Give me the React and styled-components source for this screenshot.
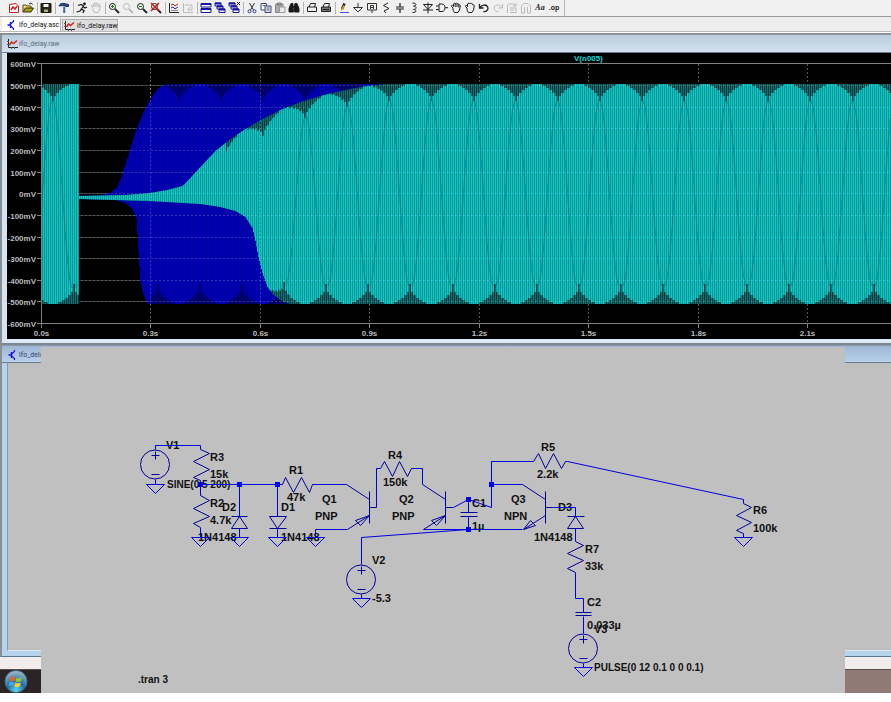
import React from 'react';
import styled, { createGlobalStyle, css } from 'styled-components';

const GlobalStyle = createGlobalStyle`
  * { box-sizing: border-box; }
  body { margin: 0; background: #ffffff; font-family: "Liberation Sans", Arial, sans-serif; }
`;

/* ---------- application chrome ---------- */

const Shell = styled.main`
  display: flex;
  flex-direction: column;
  overflow: hidden;
`;

const Toolbar = styled.div`
  display: flex;
  align-items: center;
  height: 17px;
  padding-left: 7px;
  background: #f0f0f0;
  border-bottom: 1px solid #9c9c9c;
`;

const ToolGroup = styled.div`
  display: flex;
  align-items: center;
`;

const Divider = styled.span`
  width: 1px;
  height: 12px;
  margin: 0 1px 0 2px;
  background: #b4b4b4;
`;

const ToolEnd = styled.span`
  width: 1px;
  height: 16px;
  margin-left: 3px;
  background: #b4b4b4;
`;

const ToolButton = styled.button`
  display: flex;
  align-items: center;
  justify-content: center;
  width: 14px;
  height: 14px;
  padding: 0;
  border: 0;
  background: none;
  color: ${(p) => (p.$muted ? '#b9b9b9' : '#202020')};
`;

const GlyphText = styled.span`
  font: ${(p) => (p.$script ? 'italic bold 8px "Liberation Serif", serif' : 'bold 7px "Liberation Sans", sans-serif')};
  line-height: 10px;
`;

const TabStrip = styled.nav`
  display: flex;
  align-items: flex-end;
  gap: 1px;
  height: 14px;
  padding-left: 2px;
  background: #eeeeee;
`;

const Tab = styled.button`
  display: flex;
  align-items: center;
  gap: 2px;
  padding: 0 0 0 3px;
  font: 7px Roboto, "Liberation Sans", sans-serif;
  color: #101010;
  white-space: nowrap;
  border: 1px solid #b0b0b0;
  border-bottom: 0;
  svg { flex: none; }
  ${(p) =>
    p.$active
      ? css`
          width: 59px;
          height: 14px;
          background: #ffffff;
          border-color: #ffffff #b0b0b0 #ffffff #ffffff;
        `
      : css`
          width: 56px;
          height: 12px;
          padding-left: 1px;
          background: #dedede;
        `}
`;

const Rule = styled.div`
  height: 3px;
  background: #ffffff;
  border-top: 1px solid #b8b8b8;
  border-bottom: 1px solid #8c8c8c;
`;

const Frame = styled.section`
  display: flex;
  flex-direction: column;
  border-left: 2px solid #8a8f96;
  padding-left: 5px;
  background: ${(p) => (p.$active ? '#b6d2ec' : '#d6e4f2')};
`;

const TitleBar = styled.header`
  display: flex;
  align-items: center;
  gap: 1px;
  height: ${(p) => (p.$active ? '18px' : '19px')};
  margin-left: -5px;
  padding: 1px 0 0 5px;
  font: 7px Roboto, "Liberation Sans", sans-serif;
  color: ${(p) => (p.$active ? '#2c3e58' : '#5d6c7c')};
  background: ${(p) =>
    p.$active
      ? 'linear-gradient(#9db8d6, #b9d0ea)'
      : 'linear-gradient(#b9cbdb, #d3e1ef)'};
  border-bottom: 1px solid #6d7c8c;
  border-top: 1px solid #8b98a5;
`;

const PlotPane = styled.div`
  background: #000000;
  svg { display: block; width: 100%; height: auto; }
`;

const FrameFoot = styled.div`
  height: 6px;
  margin-left: -5px;
  background: #dce8f4;
  border-bottom: 2px solid #7c8894;
`;

/* The lower desktop and the schematic sheet share one grid cell. */
const Stack = styled.div`
  display: grid;
  & > * { grid-area: 1 / 1; }
`;

const Desktop = styled.div`
  display: flex;
  flex-direction: column;
`;

const LowerFrame = styled(Frame)`
  flex: 1;
  border-bottom: 1px solid #58788c;
`;

const Client = styled.div`
  flex: 1;
  margin-bottom: 5px;
  background: #c0c0c0;
  border-left: 1px solid #8b98a5;
  border-bottom: 1px solid #dce8f0;
`;

const StatusBar = styled.footer`
  height: 12px;
  background: #f1eded;
`;

const TaskBar = styled.footer`
  display: flex;
  align-items: center;
  height: 24px;
  padding-left: 4px;
  background: linear-gradient(90deg, #2b2424 0 50%, #8f7a76 50%);
  border-top: 1px solid #5a4c4a;
`;

const StartButton = styled.button`
  width: 24px;
  height: 23px;
  padding: 0;
  border: 0;
  background: none;
  svg { display: block; }
`;

const Sheet = styled.div`
  align-self: start;
  margin: 2px 46px 0 41px;
  background: #c0c0c0;
  svg { display: block; width: 100%; height: auto; }
`;

const Label = styled.text`
  font: bold ${(p) => (p.$directive ? '10px' : '11px')} "Liberation Sans", Arial, sans-serif;
  fill: #101010;
`;

const AxisLabel = styled.text`
  font: bold 8px "Liberation Sans", Arial, sans-serif;
  fill: ${(p) => (p.$trace ? '#00d8d8' : '#bcbcbc')};
`;

/* ---------- toolbar icons ---------- */

const Ic = ({ children }) => (
  <svg width="12" height="12" viewBox="0 0 12 12" fill="none" stroke="currentColor" strokeWidth="1" aria-hidden="true">
    {children}
  </svg>
);

const WaveIcon = () => (
  <svg width="11" height="10" viewBox="0 0 11 10" fill="none" aria-hidden="true">
    <path d="M1.500 0V8.500H11" stroke="#222" />
    <path d="M0 2.500H2M0 5.500H2M4.500 8V10M7.500 8V10" stroke="#555" />
    <path d="M2.500 6L4.500 3L6.500 4.500L10 1.500" stroke="#d42020" strokeWidth="1.500" />
  </svg>
);

const SchematicIcon = () => (
  <svg width="11" height="10" viewBox="0 0 11 10" fill="none" stroke="#1414e0" aria-hidden="true">
    <path d="M1.500 5H4M4.500 2V8" strokeWidth="1.500" />
    <path d="M4.500 4L7.500 1.500V0M4.500 6L7.500 8.500V10" strokeWidth="1.200" />
  </svg>
);

const Lens = ({ children }) => (
  <Ic>
    <circle cx="4.500" cy="4.500" r="3" />
    <path d="M7 7L11 11" strokeWidth="1.800" />
    {children}
  </Ic>
);

const Hand = ({ open }) => (
  <Ic>
    <path d="M3 6L1.500 4.500C1 3.500 2 3 2.500 3.500L3.500 4.500V2C4 1 5 1 5.200 2C5.500 .8 6.800 .8 7 2C7.500 1.200 8.800 1.500 8.800 3C9.500 2.500 10.500 3 10.300 4L9.500 8L8 10.500H4.500L3 8Z" />
    {open && <path d="M5.200 2V5M7 2V5M8.800 3V5.500" />}
  </Ic>
);

const Printer = ({ filled }) => (
  <Ic>
    <path d="M3 5L4.500 1.500H9.500L8.500 5" />
    <path d="M1.500 5H10.500V9.500H1.500Z" fill={filled ? '#777' : 'none'} />
    {filled && <path d="M3 7.500H9" />}
  </Ic>
);

const Windows = ({ mark }) => (
  <Ic>
    <g stroke="#1717a0" fill="#fff">
      <path d="M1 1H7V4H1Z" /><path d="M3 4H9V7H3Z" /><path d="M5 7H11V10.500H5Z" />
      <path d="M1 1.500H7M3 4.500H9M5 7.500H11" strokeWidth="2" />
    </g>
    {mark && <path d="M9 0L12 3M12 0L9 3" stroke="#222" />}
  </Ic>
);

const groups = [
  [
    ['New schematic', <Ic><path d="M1.500 2.500L8 1.500L10.500 4V10.500H1.500Z" fill="#fff" stroke="#c02020" /><path d="M3 8L5 5L7 7L9 4" stroke="#e02020" strokeWidth="1.500" /></Ic>],
    ['Open', <Ic><path d="M1 10V3H4L5 4H9V6" fill="#f5e060" stroke="#55501a" /><path d="M1 10L3.500 6H11.500L9 10Z" fill="#a89c20" stroke="#33300a" /><path d="M7 2C8 .8 10 1 10.500 2.500" /></Ic>],
  ],
  [['Save', <Ic><path d="M1 1.500H11V10.500H1Z" fill="#282818" stroke="#181810" /><path d="M3.500 2H8.500V5H3.500Z" fill="#f0f0f0" stroke="none" /><path d="M4 7.500H8V10H4Z" fill="#b0b070" stroke="none" /></Ic>]],
  [['Control panel', <Ic><path d="M1 4C2 1.500 4 1 6 1.500L10.500 2.500V4.500H7.500V3.500H5Z" fill="#2b4a90" stroke="#1c2c60" /><path d="M6.200 4.500V11" stroke="#4668a8" strokeWidth="2" /></Ic>]],
  [
    ['Run', <Ic><circle cx="8.500" cy="1.800" r="1" fill="currentColor" /><path d="M2 3.500L5 2.500L7.500 4L5.500 7L8 8.500L7 11M5.500 7L4 9L.5 10M7 4.500L9 6L11 5" strokeWidth="1.300" /></Ic>],
    ['Halt', <Hand open />, true],
  ],
  [
    ['Zoom in', <Lens><path d="M3 4.500H6M4.500 3V6" stroke="#108010" /></Lens>],
    ['Pan', <Lens />, true],
    ['Zoom out', <Lens><path d="M3 4.500H6" stroke="#108010" /></Lens>],
    ['Zoom full extents', <Lens><path d="M1 1L9 9M9 1L1 9" stroke="#c81818" strokeWidth="1.500" /></Lens>],
  ],
  [
    ['Autorange', <Ic><path d="M1.500 1V10.500H11" /><path d="M3 3L5 2L7 4L10 2" stroke="#c02020" /><path d="M3 6L5 5L7 7L10 5" stroke="#2020c0" /><path d="M3 8.500H10" stroke="#888" /></Ic>],
    ['Add trace', <Ic><path d="M1.500 1V10.500H11M3 3H10V8H6M6 8L8 5" /></Ic>, true],
  ],
  [
    ['Tile windows', <Ic><g stroke="#1717a0"><path d="M1 1.500H11V5H1Z" fill="#fff" /><path d="M1 6.500H11V10.500H1Z" fill="#fff" /><path d="M1 2H11M1 7H11" strokeWidth="2" /></g></Ic>],
    ['Cascade windows', <Windows />],
    ['Close all windows', <Windows mark />],
  ],
  [
    ['Cut', <Ic><path d="M3.500 1L7.500 8M8.500 1L4.500 8" stroke="#303848" /><circle cx="3.500" cy="9.300" r="1.500" stroke="#303890" /><circle cx="8.500" cy="9.300" r="1.500" stroke="#303890" /></Ic>],
    ['Copy', <Ic><path d="M1 1.500H6.500V8H1Z" fill="#fff" stroke="#404878" /><path d="M5 4H11V10.500H5Z" fill="#dde" stroke="#404878" /><path d="M6.500 6H9.500M6.500 8H9.500M2.500 3.500H5" stroke="#666" /></Ic>],
    ['Paste', <Ic><path d="M1.500 2H9V10.500H1.500Z" fill="#aaa" stroke="#888" /><path d="M3.500 1H7V3H3.500Z" stroke="#777" /><path d="M5.500 5H11V10.500H5.500Z" fill="#e8e8e8" stroke="#999" /></Ic>],
    ['Find', <Ic><path d="M3 1.500H5V4L5.500 10H1V6.500ZM7 1.500H9L11 6.500V10H6.500V4Z" fill="#181818" /><path d="M5 5H7" strokeWidth="2" /></Ic>],
  ],
  [
    ['Print', <Printer />],
    ['Print preview', <Printer filled />],
  ],
  [
    ['Wire', <Ic><path d="M4 7L6.500 1.500" stroke="#302010" strokeWidth="2.500" /><path d="M3.500 8.500L6 3.500" stroke="#e0a020" strokeWidth="1.500" /><path d="M2 10.500H11" stroke="#4848e0" /></Ic>],
    ['Ground', <Ic><path d="M6 1V5.500M1.500 5.500H10.500L6 10Z" stroke="#34342a" /></Ic>],
    ['Label net', <Ic><path d="M1.500 1.500H10.500V8H1.500ZM6 8V11M4.500 7V3.500H7.500V7M4.500 5.500H7.500" stroke="#34342a" /></Ic>],
    ['Resistor', <Ic><path d="M8 1L3.500 3.500L9 6.500L4 9L6 11" /></Ic>],
    ['Capacitor', <Ic><path d="M6 1V5M2 5H10M2 7H10M6 7V11" strokeWidth="1.200" /></Ic>],
    ['Inductor', <Ic><path d="M4.500 1C9 1 9 4 5.500 4.200C9 4.500 9 7.200 5.500 7.500C9 7.800 9 10.500 4.500 10.500" /></Ic>],
    ['Diode', <Ic><path d="M6 .5V11.500M1.500 2.500H10.500L6 7.500ZM1 8H11" /></Ic>],
    ['Component', <Ic><path d="M3 2H6C10 2 10 9.500 6 9.500H3ZM0 4H3M0 7.500H3M9 5.700H12" /></Ic>],
    ['Move', <Hand open />],
    ['Drag', <Hand />],
    ['Undo', <Ic><path d="M1.500 2V6H5.500M1.500 6C4 2.500 8 2 9.700 5C11 8 8 10 5.500 9.500" strokeWidth="1.300" /></Ic>],
    ['Redo', <Ic><path d="M10.500 2V6H6.500M10.500 6C8 2.500 4 2 2.300 5C1 8 4 10 6.500 9.500" /></Ic>, true],
    ['Rotate', <Ic><path d="M1.500 11V4C2 1 8 1 10 4M10 1V4H7M4 6H10V10.500H4M4 8H8" /></Ic>, true],
    ['Mirror', <Ic><path d="M4.500 11H1.500V4L4 1.500H8L10.500 4V11H7.500M4.500 11V5M7.500 11V5" /></Ic>, true],
    ['Text', <GlyphText $script>Aa</GlyphText>],
    ['SPICE directive', <GlyphText>.op</GlyphText>],
  ],
];

/* ---------- waveform plot ---------- */

const PLOT_LEFT = 41;
const PLOT_RIGHT = 891;
const LOBE = 42.1;
const VALLEY = 431;

const interp = (pts, x) => {
  if (x <= pts[0][0]) return pts[0][1];
  for (let i = 1; i < pts.length; i += 1) {
    if (x <= pts[i][0]) {
      const [x0, y0] = pts[i - 1];
      const [x1, y1] = pts[i];
      return y0 + ((y1 - y0) * (x - x0)) / (x1 - x0);
    }
  }
  return pts[pts.length - 1][1];
};

const cyanTop = [[79, 196], [125, 195], [150, 193], [167, 190], [182, 186], [188, 180], [200, 167], [215, 151], [230, 139], [245, 129], [262, 119], [280, 110], [300, 102], [320, 96], [340, 91], [360, 87], [385, 84]];
const cyanBottom = [[79, 199], [150, 201], [200, 204], [220, 207], [235, 211], [245, 217], [252, 228], [255, 241], [258, 257], [262, 273], [267, 287], [273, 295], [283, 302], [290, 304]];
const blueTop = [[79, 196], [100, 195], [110, 193], [117, 187], [121, 177], [128, 155], [135, 132], [144, 110], [151, 97], [158, 88], [165, 84]];
const blueBottom = [[79, 199], [115, 200], [125, 203], [131, 208], [136, 218], [138, 250], [140, 282], [143, 295], [147, 303], [150, 304]];

/* distance in pixels to the nearest lobe boundary */
const near = (x, origin) => {
  const d = (((x - origin) % LOBE) + LOBE) % LOBE;
  return Math.min(d, LOBE - d);
};
const notch = (d, depth) => {
  if (d < 1) return depth;
  if (d < 3) return 12;
  if (d < 6) return 9;
  if (d < 9) return 6;
  if (d < 12) return 4;
  return d < 16 ? 2 : 0;
};

const bars = { cyanA: '', cyanB: '', cyanDark: '', cyanDeep: '', blueA: '', blueB: '', blueDark: '' };
for (let x = PLOT_LEFT; x < PLOT_RIGHT; x += 1) {
  const odd = x % 2 === 1;
  const burst = x < 79;
  const line = (a, b) => `M${x + 0.5} ${a}V${b}`;
  const t = notch(near(x, VALLEY), 17);
  const b = notch(near(x, VALLEY - LOBE / 2), 20);
  if (!burst && x < 420) {
    const y0 = interp(blueTop, x);
    const y1 = interp(blueBottom, x);
    const k = x > 150 ? 1 : 0;
    bars.blueDark += line(y0, y1);
    bars[x % 3 === 0 ? 'blueA' : 'blueB'] += line(y0 + t * k, y1 - b * k);
  }
  const y0 = burst ? 84 : interp(cyanTop, x);
  const y1 = burst ? 304 : interp(cyanBottom, x);
  const kt = burst || x > 225 ? 1 : 0;
  const kb = burst || x > 270 ? 1 : 0;
  bars[odd ? 'cyanDark' : 'cyanDeep'] += line(y0, y1);
  bars[odd ? 'cyanA' : 'cyanB'] += line(y0 + t * kt, y1 - b * kb);
}

let seams = '';
for (let v = VALLEY - LOBE * 9; v < PLOT_RIGHT + LOBE; v += LOBE) {
  [-1, 1].forEach((dir) => {
    let started = false;
    for (let i = 0; i <= 20; i += 1) {
      const x = v + dir * i;
      if ((x > 77 && x < 284) || x < PLOT_LEFT || x >= PLOT_RIGHT) continue;
      const a = x < 79 ? 100 : interp(cyanTop, x) + 16;
      const b = x < 79 ? 288 : interp(cyanBottom, x) - 18;
      const y = (a + b) / 2 - ((b - a) / 2) * Math.cos((Math.PI * i) / 20);
      seams += `${started ? 'L' : 'M'}${Math.round(x) + 0.5} ${Math.round(y)}`;
      started = true;
    }
  });
}

const voltTicks = [600, 500, 400, 300, 200, 100, 0, -100, -200, -300, -400, -500, -600];
const timeTicks = ['0.0s', '0.3s', '0.6s', '0.9s', '1.2s', '1.5s', '1.8s', '2.1s'];
const voltY = (mv) => Math.floor(193.7 - mv * 0.2165) + 0.5;
const timeX = (i) => Math.floor(41 + i * 109.5) + 0.5;

const Plot = () => (
  <svg viewBox="7 53 884 286" role="img" aria-label="V(n005) against time">
    <g stroke="#5a5a5a" strokeDasharray="2 2">
      {voltTicks.slice(1, -1).map((v) => <path key={v} d={`M41 ${voltY(v)}H891`} />)}
      {timeTicks.slice(1).map((t, i) => <path key={t} d={`M${timeX(i + 1)} 64V324`} />)}
    </g>
    <path d={bars.blueDark} stroke="#00006a" />
    <path d={bars.blueA} stroke="#000092" />
    <path d={bars.blueB} stroke="#0000b8" />
    <path d={bars.cyanDeep} stroke="#063c40" />
    <path d={bars.cyanDark} stroke="#0a7474" />
    <path d={bars.cyanA} stroke="#0cc8c4" />
    <path d={bars.cyanB} stroke="#00989a" />
    <path d={seams} stroke="#045c64" strokeOpacity="0.45" fill="none" />
    <g stroke="#ffffff" strokeOpacity="0.2" strokeDasharray="2 2">
      {voltTicks.slice(1, -1).map((v) => <path key={v} d={`M79 ${voltY(v)}H891`} />)}
      <path d={`M${timeX(1)} 84V304M${timeX(2)} 84V304`} />
    </g>
    <path d="M41.500 64V328M37 63.500H891M37 323.500H891" stroke="#808080" fill="none" />
    {voltTicks.map((v) => (
      <g key={v}>
        <path d={`M37 ${voltY(v)}H42`} stroke="#808080" />
        <AxisLabel x="36" y={voltY(v) + 3} textAnchor="end">{`${v}mV`}</AxisLabel>
      </g>
    ))}
    {timeTicks.map((t, i) => (
      <g key={t}>
        <path d={`M${timeX(i)} 323V328`} stroke="#808080" />
        <AxisLabel x={timeX(i)} y="336" textAnchor="middle">{t}</AxisLabel>
      </g>
    ))}
    <AxisLabel $trace x="574" y="61">V(n005)</AxisLabel>
  </svg>
);

/* ---------- schematic ---------- */

const grounds = [[155, 484], [200, 537], [239, 537], [277, 537], [315, 537], [361, 598], [743, 537], [583, 667]];
const nodes = [[200, 484], [239, 484], [277, 484], [468, 499], [468, 529], [491, 484]];
const sources = [[155, 464, 'V1'], [361, 579, 'V2'], [583, 648, 'V3']];

const wires = [
  'M155 449V445H200V449M155 479V484M200 480V495M200 527V537',
  'M200 484H282M239 484V516M239 528V537M277 484V516M277 528V537M312 484H346',
  'M347 529H315V537M376 507V468H380M411 468H422V484',
  'M453 507L468 499L491 507V461H533M491 484H522M468 499V512M468 516V529M423 529H522M468 529L361 537V564M361 594V598',
  'M567 461L743 499V503M743 533V537M553 507H575V516M575 528V541M575 572V598H583V612M583 616V633M583 663V667',
];

const parts = [
  'M200 449L209 453L193 461L209 469L193 477L200 480',
  'M200 495L209 500L193 508L209 516L193 523L200 527',
  'M282 484L285 477L293 492L301 477L309 492L312 484',
  'M380 468L384 461L392 476L399 461L407 476L411 468',
  'M533 461L538 453L545 468L553 453L561 468L565 461H567',
  'M743 503L751 507L736 515L751 522L736 530L743 533',
  'M575 541L583 545L567 553L583 560L567 568L575 572',
  'M231 516H247M239 516L231 528H247Z',
  'M269 516H286L277 528ZM269 528H286',
  'M567 516H584M575 516L567 528H583Z',
  'M346 484L369 499M369 491V523M369 507H376M369 515L347 529M369 515L355 520L360 525Z',
  'M422 484L445 499M445 491V523M445 507H453M445 515L423 529M445 515L431 520L436 525Z',
  'M522 484L545 499M545 491V523M545 507H553M545 515L523 529M523 529L530 520L535 525Z',
  'M460 512H477M460 516H477M575 612H591M575 615H591',
];

const labels = [
  [166, 449, 'V1'], [210, 461, 'R3'], [210, 478, '15k'], [167, 488, 'SINE(0 5 200)', true],
  [210, 507, 'R2'], [210, 524, '4.7k'], [222, 511, 'D2'], [198, 541, '1N4148'],
  [281, 511, 'D1'], [281, 541, '1N4148'], [289, 474, 'R1'], [287, 501, '47k'],
  [322, 503, 'Q1'], [315, 520, 'PNP'], [388, 459, 'R4'], [383, 486, '150k'],
  [399, 503, 'Q2'], [392, 520, 'PNP'], [472, 507, 'C1'], [472, 530, '1µ'],
  [372, 564, 'V2'], [372, 602, '-5.3'], [541, 451, 'R5'], [537, 478, '2.2k'],
  [511, 503, 'Q3'], [504, 520, 'NPN'], [558, 511, 'D3'], [534, 541, '1N4148'],
  [585, 553, 'R7'], [585, 570, '33k'], [587, 606, 'C2'], [587, 629, '0.033µ'],
  [594, 633, 'V3'], [594, 671, 'PULSE(0 12 0.1 0 0 0.1)', true], [753, 514, 'R6'],
  [753, 532, '100k'], [138, 683, '.tran 3', true],
];

const Schematic = () => (
  <svg viewBox="41 347 804 346" role="img" aria-label="LFO delay schematic">
    {labels.map(([x, y, t, directive]) => (
      <Label key={`${x}-${y}`} x={x} y={y} $directive={directive}>{t}</Label>
    ))}
    <g transform="translate(.5 .5)" fill="none" strokeWidth="1">
      {parts.map((d) => <path key={d} d={d} stroke="#000098" />)}
      {sources.map(([x, y, n]) => (
        <g key={n} stroke="#000098">
          <circle cx={x - 0.5} cy={y} r="14.500" />
          <path d={`M${x - 4} ${y - 9}H${x + 4}M${x} ${y - 13}V${y - 5}M${x - 4} ${y + 10}H${x + 4}`} />
        </g>
      ))}
      {wires.map((d) => <path key={d} d={d} stroke="#0000dc" />)}
      {grounds.map(([x, y]) => <path key={`${x}-${y}`} d={`M${x - 9} ${y}H${x + 9}L${x} ${y + 9}Z`} stroke="#0000d8" />)}
      {nodes.map(([x, y]) => <rect key={`${x}-${y}`} x={x - 2.5} y={y - 2.5} width="5" height="5" fill="#0000f0" />)}
    </g>
  </svg>
);

const Orb = () => (
  <svg width="24" height="23" viewBox="0 0 24 23" aria-hidden="true">
    <defs>
      <radialGradient id="orb" cx="0.5" cy="0.9" r="0.8">
        <stop offset="0" stopColor="#5fd8f0" />
        <stop offset="0.5" stopColor="#1d6ea8" />
        <stop offset="1" stopColor="#8fb0c4" />
      </radialGradient>
    </defs>
    <circle cx="12" cy="11.500" r="11" fill="url(#orb)" stroke="#416a80" strokeWidth="0.800" />
    <path d="M6.500 7.500C8 6.300 10 6.300 11.500 7.300L10.500 11.300C9 10.500 7 10.500 5.500 11.500Z" fill="#e8642c" />
    <path d="M12.500 7.500C14 8.500 16 8.300 18 7.300L17 11.300C15.500 12.300 13 12.300 11.500 11.500Z" fill="#8cc63c" />
    <path d="M5.200 12.500C7 11.500 9 11.500 10.300 12.300L9.300 16.300C8 15.300 6 15.500 4.500 16.300Z" fill="#48a8e8" />
    <path d="M11.300 12.600C13 13.500 15 13.500 16.800 12.500L15.800 16.500C14 17.500 12 17.500 10.300 16.600Z" fill="#f8d038" />
  </svg>
);

export default function App() {
  return (
    <Shell>
      <GlobalStyle />
      <Toolbar role="toolbar" aria-label="Main">
        {groups.map((group, i) => (
          <React.Fragment key={group[0][0]}>
            {i > 0 && <Divider />}
            <ToolGroup>
              {group.map(([name, icon, muted]) => (
                <ToolButton key={name} type="button" aria-label={name} $muted={muted}>{icon}</ToolButton>
              ))}
            </ToolGroup>
          </React.Fragment>
        ))}
        <ToolEnd />
      </Toolbar>
      <TabStrip aria-label="Open documents">
        <Tab type="button" $active><SchematicIcon />lfo_delay.asc</Tab>
        <Tab type="button"><WaveIcon />lfo_delay.raw</Tab>
      </TabStrip>
      <Rule />
      <Frame>
        <TitleBar><WaveIcon />lfo_delay.raw</TitleBar>
        <PlotPane><Plot /></PlotPane>
        <FrameFoot />
      </Frame>
      <Stack>
        <Desktop>
          <LowerFrame $active>
            <TitleBar $active><SchematicIcon />lfo_delay.asc</TitleBar>
            <Client />
          </LowerFrame>
          <StatusBar />
          <TaskBar>
            <StartButton type="button" aria-label="Start"><Orb /></StartButton>
          </TaskBar>
        </Desktop>
        <Sheet><Schematic /></Sheet>
      </Stack>
    </Shell>
  );
}
